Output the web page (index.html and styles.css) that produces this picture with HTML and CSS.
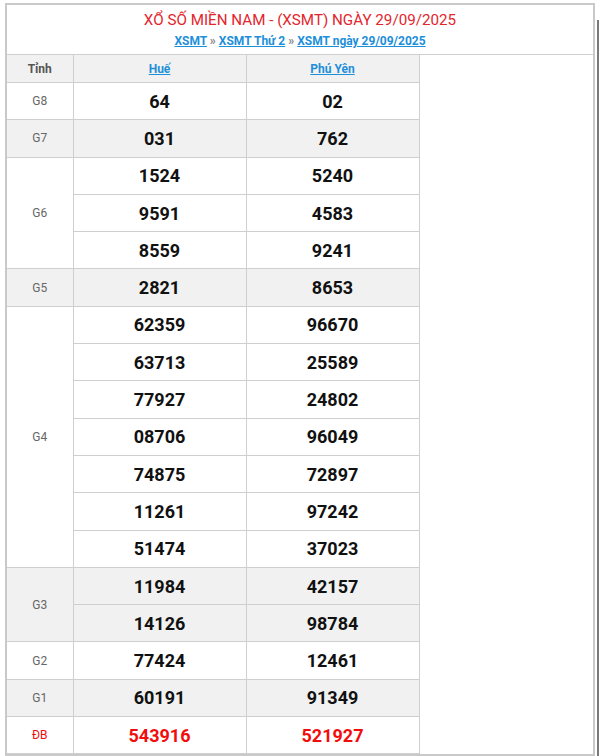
FILE: index.html
```html
<!DOCTYPE html>
<html lang="vi">
<head>
<meta charset="utf-8">
<title>XSMT 29/09/2025</title>
<link rel="stylesheet" href="styles.css">
</head>
<body>
<div class="page">
  <div class="box">
    <div class="head">
      <h2 class="title">XỔ SỐ MIỀN NAM - (XSMT) NGÀY 29/09/2025</h2>
      <div class="crumbs"><a href="#">XSMT</a> » <a href="#">XSMT Thứ 2</a> » <a href="#">XSMT ngày 29/09/2025</a></div>
    </div>
    <table class="kq">
      <colgroup><col class="c-name"><col class="c-prov"><col class="c-prov"></colgroup>
      <thead>
        <tr class="alt"><th class="lbl-h">Tỉnh</th><th><a href="#">Huế</a></th><th><a href="#">Phú Yên</a></th></tr>
      </thead>
      <tbody>
        <tr><td class="lbl">G8</td><td>64</td><td>02</td></tr>
        <tr class="alt"><td class="lbl">G7</td><td>031</td><td>762</td></tr>
        <tr><td class="lbl" rowspan="3">G6</td><td>1524</td><td>5240</td></tr>
        <tr><td>9591</td><td>4583</td></tr>
        <tr><td>8559</td><td>9241</td></tr>
        <tr class="alt"><td class="lbl">G5</td><td>2821</td><td>8653</td></tr>
        <tr><td class="lbl" rowspan="7">G4</td><td>62359</td><td>96670</td></tr>
        <tr><td>63713</td><td>25589</td></tr>
        <tr><td>77927</td><td>24802</td></tr>
        <tr><td>08706</td><td>96049</td></tr>
        <tr><td>74875</td><td>72897</td></tr>
        <tr><td>11261</td><td>97242</td></tr>
        <tr><td>51474</td><td>37023</td></tr>
        <tr class="alt"><td class="lbl" rowspan="2">G3</td><td>11984</td><td>42157</td></tr>
        <tr class="alt"><td>14126</td><td>98784</td></tr>
        <tr><td class="lbl">G2</td><td>77424</td><td>12461</td></tr>
        <tr class="alt"><td class="lbl">G1</td><td>60191</td><td>91349</td></tr>
        <tr class="db"><td class="lbl">ĐB</td><td>543916</td><td>521927</td></tr>
      </tbody>
    </table>
  </div>
  <div class="side"></div>
</div>
</body>
</html>
```
FILE: styles.css
```css
html, body {
  margin: 0;
  padding: 0;
  background: #fff;
  font-family: Roboto, "Liberation Sans", Arial, sans-serif;
}
.page {
  display: flex;
  align-items: flex-start;
  padding: 3px 0 0 5px;
  gap: 2px;
}
.box {
  width: 586px;
  border: 2px solid #c9c9c9;
  background: #fff;
  flex: none;
}
.head {
  height: 50px;
  border-bottom: 1px solid #cfcfcf;
  text-align: center;
  padding-top: 5px;
  box-sizing: border-box;
}
.title {
  margin: 0;
  font-size: 15.2px;
  font-weight: 400;
  line-height: 20px;
  color: #e3252c;
}
.crumbs {
  margin-top: 3px;
  font-size: 12px;
  line-height: 16px;
  font-weight: 700;
  color: #888;
}
.crumbs a, .kq th a {
  color: #1e8fd9;
  text-decoration: underline;
}
.kq {
  border-collapse: collapse;
  width: 412px;
  table-layout: fixed;
}
.c-name { width: 66px; }
.c-prov { width: 173px; }
.kq th, .kq td {
  border: 1px solid #cfcfcf;
  text-align: center;
  padding: 0;
}
.kq th:first-child, .kq td.lbl { border-left: none; }
.kq thead tr:first-child th { border-top: none; }
.kq th {
  height: 27px;
  font-size: 12px;
  font-weight: 700;
  color: #555;
}
.kq td {
  height: 36.3px;
  font-size: 18px;
  font-weight: 700;
  color: #111;
}
.kq td.lbl {
  font-size: 12px;
  font-weight: 400;
  color: #666;
  background: #fff;
}
.kq tr.alt td, .kq tr.alt th, .kq tr.alt td.lbl {
  background: #f1f1f1;
}
.kq tr.db td, .kq tr.db td.lbl {
  color: #f20d0d;
}
.side {
  width: 2px;
  height: 740px;
  margin-top: 17px;
  background: #7a7a7a;
}
```
